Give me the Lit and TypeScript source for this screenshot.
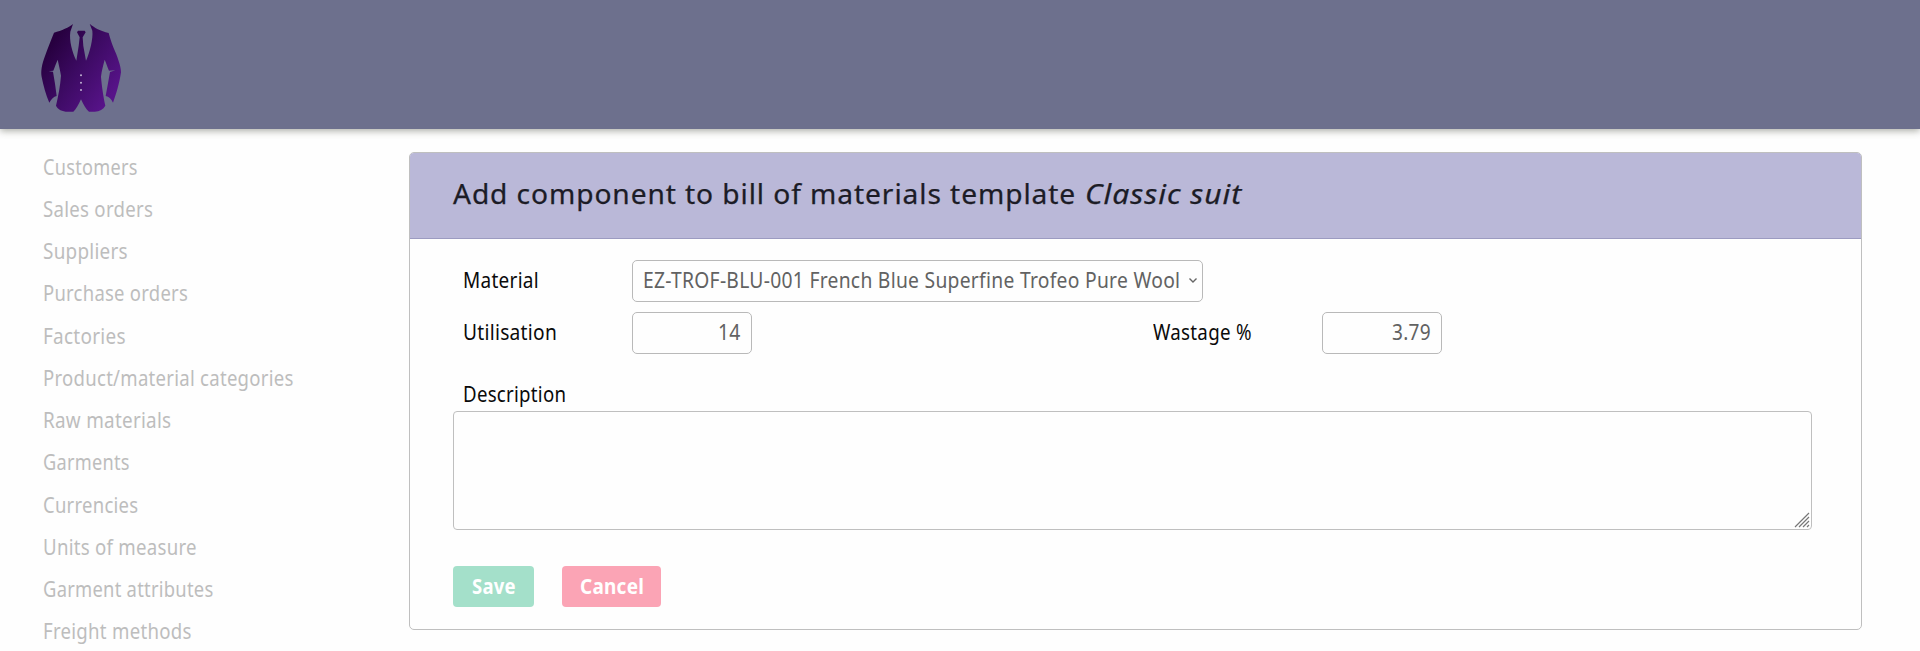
import { LitElement, html, css } from "lit";
import { customElement, property, query, state } from "lit/decorators.js";
import { styleMap } from "lit/directives/style-map.js";

/** A run of text condensed or widened so that it takes up a set measure. */
@customElement("measured-text")
class MeasuredText extends LitElement {
  @property() text = "";
  @property({ type: Number }) measure = 0;
  @state() private ratio = 1;
  @query(".run") private run!: HTMLElement;

  static styles = css`
    :host { display: inline-block; white-space: nowrap; }
    .box { display: block; }
    .run { display: inline-block; transform-origin: 0 50%; white-space: nowrap; }
  `;

  firstUpdated() {
    this.ratio = this.measure / this.run.offsetWidth;
  }

  render() {
    return html`<span class="box" style=${styleMap({ width: `${this.measure}px` })}
      ><span class="run" style=${styleMap({ transform: `scaleX(${this.ratio})` })}>${this.text}</span></span
    >`;
  }
}

const menu: [string, number][] = [
  ["Customers", 95],
  ["Sales orders", 110],
  ["Suppliers", 84.5],
  ["Purchase orders", 145],
  ["Factories", 83],
  ["Product/material categories", 251],
  ["Raw materials", 128.5],
  ["Garments", 86.5],
  ["Currencies", 95],
  ["Units of measure", 153.5],
  ["Garment attributes", 170.5],
  ["Freight methods", 149],
];

@customElement("app-root")
class AppRoot extends LitElement {
  static styles = css`
    :host {
      display: flex;
      flex-direction: column;
      height: 651px;
      overflow: hidden;
      background: #fefefe;
      color: #0a0a0a;
      font: 21px/42px "Noto Sans", "Open Sans", sans-serif;
      letter-spacing: 0.3px;
    }
    * { box-sizing: border-box; }
    .top {
      height: 129px;
      flex: none;
      padding: 10px 20px;
      background: #6d708d;
      box-shadow: 0 2px 7px rgba(70, 75, 60, 0.45);
    }
    .logo { display: block; width: 130px; height: 118px; }
    .page { display: flex; flex: 1; min-height: 0; }
    .menu { width: 409px; flex: none; padding: 16.5px 0 0 42.5px; color: #bdbdbd; }
    .item { height: 42.27px; }
    .card {
      width: 1453px;
      height: 478px;
      margin-top: 22.5px;
      border: 1px solid #bfbfbf;
      border-radius: 5px;
      overflow: hidden;
    }
    .title {
      display: flex;
      gap: 9px;
      height: 86px;
      margin: 0;
      padding: 20px 0 0 43px;
      background: #bab8d8;
      border-bottom: 1px solid #9c9bc1;
      color: #1c1c26;
      font-size: 27.5px;
      font-weight: 400;
      letter-spacing: 0.9px;
      -webkit-text-stroke: 0.25px #1c1c26;
    }
    .body { display: flex; flex-direction: column; padding: 21px 49px 0 43px; }
    .row { display: grid; grid-template-columns: 179px 690px auto; height: 52.5px; }
    .pair { grid-template-columns: 179px 511px 179px auto; }
    .label { padding-left: 10px; line-height: 40px; }
    .field {
      display: flex;
      align-items: center;
      height: 42px;
      border: 1px solid #b9b9b9;
      border-radius: 5px;
      color: #626262;
      line-height: 38px;
      padding-bottom: 2px;
    }
    .select { width: 571px; padding: 0 10px 2px; justify-content: space-between; }
    .number { width: 120px; justify-content: flex-end; padding-right: 10px; }
    .caret { width: 10px; height: 7px; margin: 2px -6px 0 0; }
    .desc { padding-left: 10px; height: 36px; line-height: 42px; margin-top: 8px; }
    .area {
      display: flex;
      justify-content: flex-end;
      align-items: flex-end;
      height: 119.5px;
      border: 1px solid #bfbfbf;
      border-radius: 4px;
      padding: 1px;
      margin-top: 2px;
    }
    .grip { width: 16px; height: 16px; }
    .actions { display: flex; gap: 28px; margin-top: 36px; }
    .button {
      display: flex;
      justify-content: center;
      height: 41px;
      border-radius: 4px;
      color: #fff;
      font-weight: 700;
      line-height: 40px;
    }
    .save { width: 81px; background: #a4e0ca; }
    .cancel { width: 99px; background: #fba4b5; }
  `;

  render() {
    return html`
      <header class="top">
        <svg class="logo" viewBox="0 0 390 354">
          <defs>
            <linearGradient id="cloth" x1="0.15" y1="0.2" x2="0.9" y2="0.8">
              <stop offset="0" stop-color="#27003f" />
              <stop offset="0.45" stop-color="#3c0a62" />
              <stop offset="1" stop-color="#571389" />
            </linearGradient>
          </defs>
          <path
            fill="url(#cloth)"
            d="M159 42C147 52 125 62 102 68C94 88 84 112 75 138C65 165 62 184 65 201C70 227 78 255 88 278C94 267 101 260 110 258L105 221L99 185L86 184L100 182C105 169 109 158 113 149C117 168 121 183 123 197C121 225 115 258 108 287C113 298 127 305 143 305H160C168 298 176 284 183 268C190 284 198 298 207 305H224C239 304 250 298 256 287C250 260 245 225 243 200C245 182 250 164 254 149C259 159 262 172 267 182L286 181L270 186L264 220L257 258C267 260 274 267 279 278C288 254 298 222 303 187C303 169 292 139 280 112C274 96 270 83 266 69C242 63 222 53 209 41L217 62C220 85 209 128 198 152L190 108L188 82L197 67L194 62H174L171 67L179 82L176 108L169 152C157 128 147 91 151 65Z"
          />
          <g fill="#c0b2d2">
            <circle cx="183" cy="196" r="3" />
            <circle cx="183" cy="218" r="3" />
            <circle cx="183" cy="240" r="3" />
          </g>
        </svg>
      </header>
      <main class="page">
        <nav class="menu">
          ${menu.map(
            ([name, size]) =>
              html`<div class="item"><measured-text text=${name} measure=${size}></measured-text></div>`
          )}
        </nav>
        <section class="card">
          <h1 class="title">
            <measured-text text="Add component to bill of materials template" measure="623"></measured-text>
            <em><measured-text text="Classic suit" measure="157"></measured-text></em>
          </h1>
          <div class="body">
            <div class="row">
              <span class="label"><measured-text text="Material" measure="76"></measured-text></span>
              <div class="field select">
                <measured-text
                  text="EZ-TROF-BLU-001 French Blue Superfine Trofeo Pure Wool"
                  measure="537"
                ></measured-text>
                <svg class="caret" viewBox="0 0 10 7">
                  <path d="M1.5 1.5L5 5L8.5 1.5" fill="none" stroke="#666" stroke-width="1.4" />
                </svg>
              </div>
            </div>
            <div class="row pair">
              <span class="label"><measured-text text="Utilisation" measure="94"></measured-text></span>
              <div class="field number"><measured-text text="14" measure="23"></measured-text></div>
              <span class="label"><measured-text text="Wastage %" measure="99"></measured-text></span>
              <div class="field number"><measured-text text="3.79" measure="39"></measured-text></div>
            </div>
            <div class="desc"><measured-text text="Description" measure="103"></measured-text></div>
            <div class="area">
              <svg class="grip" viewBox="0 0 16 16">
                <path d="M1 15L15 1M5 15L15 5M9 15L15 9M13 15L15 13" stroke="#777" stroke-width="1.2" />
              </svg>
            </div>
            <div class="actions">
              <div class="button save"><measured-text text="Save" measure="44"></measured-text></div>
              <div class="button cancel"><measured-text text="Cancel" measure="64"></measured-text></div>
            </div>
          </div>
        </section>
      </main>
    `;
  }
}
